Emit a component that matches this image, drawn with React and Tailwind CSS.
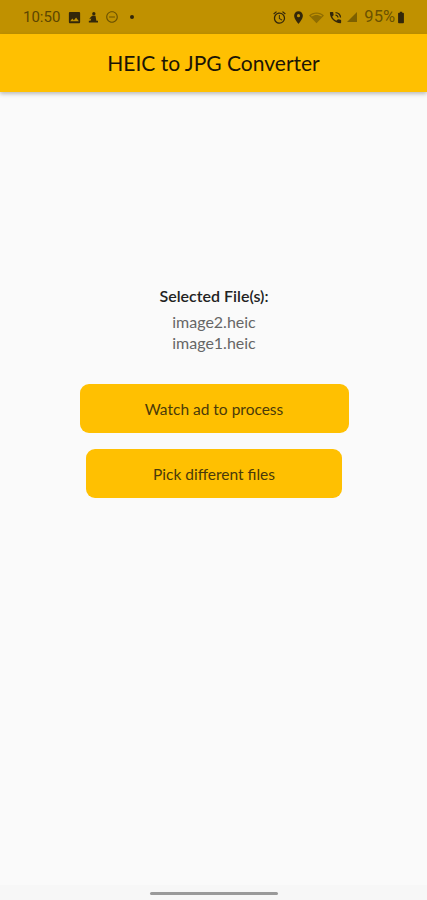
import { MdInsertPhoto, MdOutlineDoNotDisturbOn, MdAccessAlarm, MdPlace, MdNetworkWifi, MdPhoneInTalk, MdSignalCellular4Bar, MdBatteryFull } from 'react-icons/md';

const font = "font-['Lato','Noto_Sans',sans-serif]";

function StatusBar() {
  return (
    <div className="h-[34px] bg-[#c09100] flex items-center justify-between pl-[23px] pr-[19px]">
      <div className="flex items-center text-[#33270a]">
        <span className="text-[15px] font-['Roboto',sans-serif] text-[#5c4600] w-[39px]">10:50</span>
        <MdInsertPhoto className="w-[15px] h-[15px] ml-[5px]" />
        <svg viewBox="0 0 12 14" className="w-[10px] h-[13px] ml-[6px]" fill="currentColor">
          <circle cx="7" cy="2.5" r="2" />
          <path d="M5 5h4l1 6h2v2H1v-2h2l1-3-2 1V8z" />
        </svg>
        <MdOutlineDoNotDisturbOn className="w-[14px] h-[14px] ml-[7px] text-[#6b5200]" />
        <span className="w-[4px] h-[4px] rounded-full bg-[#33270a] ml-[11px]" />
      </div>
      <div className="flex items-center text-[#33270a]">
        <MdAccessAlarm className="w-[15px] h-[15px]" />
        <MdPlace className="w-[15px] h-[15px] ml-[4px]" />
        <MdNetworkWifi className="w-[15px] h-[15px] ml-[3px] text-[#8f6d00]" />
        <MdPhoneInTalk className="w-[15px] h-[15px] ml-[4px]" />
        <MdSignalCellular4Bar className="w-[12px] h-[12px] ml-[3px] text-[#7d6000]" />
        <span className="text-[16.5px] font-['Roboto',sans-serif] text-[#6b5200] ml-[6px]">95%</span>
        <MdBatteryFull className="w-[14px] h-[15px] -ml-[1px]" />
      </div>
    </div>
  );
}

export default function App() {
  return (
    <div className={`${font} w-[427px] h-[900px] bg-[#fafafa] flex flex-col overflow-hidden`}>
      <StatusBar />
      <div className="h-[58px] bg-[#ffc001] shadow-[0_2px_4px_rgba(0,0,0,0.25)] flex items-center justify-center">
        <h1 className="text-[21px] text-[#1c1505]">HEIC to JPG Converter</h1>
      </div>
      <main className="flex-1 flex flex-col items-center pt-[194px] pl-px">
        <p className="text-[16px] leading-[20px] font-semibold text-[#222]">Selected File(s):</p>
        <p className="text-[16px] leading-[21px] text-[#666] mt-[5px]">image2.heic</p>
        <p className="text-[16px] leading-[21px] text-[#666]">image1.heic</p>
        <button className="w-[269px] h-[49px] mt-[31px] pt-[2px] bg-[#ffc001] rounded-[9px] text-[15.5px] text-[#4a3a0a]">Watch ad to process</button>
        <button className="w-[256px] h-[49px] mt-[16px] pt-[2px] bg-[#ffc001] rounded-[9px] text-[15.5px] text-[#4a3a0a]">Pick different files</button>
      </main>
      <div className="h-[15px] bg-[#f7f7f7] flex justify-center pt-[7px]">
        <div className="w-[128px] h-[3px] rounded-full bg-[#9a9a9a]" />
      </div>
    </div>
  );
}
